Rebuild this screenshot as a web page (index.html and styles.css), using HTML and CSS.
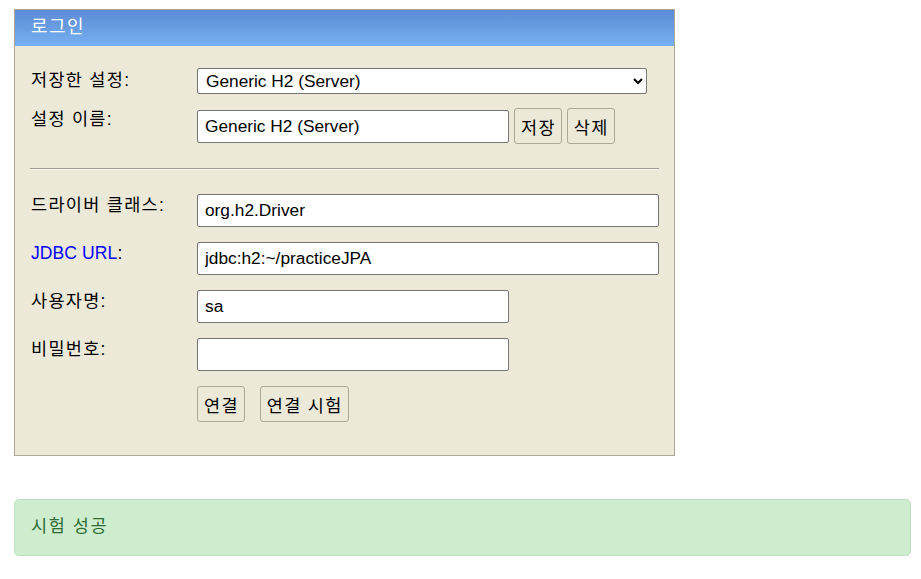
FILE: index.html
```html
<!DOCTYPE html>
<html lang="ko">
<head>
  <meta charset="UTF-8" />
  <meta name="viewport" content="width=device-width, initial-scale=1.0" />
  <title>H2 Console</title>
  <link rel="stylesheet" href="styles.css">
</head>
<body>
  <!-- Login panel -->
  <form class="login" name="login">
    <div class="login-title">로그인</div>
    <div class="login-body">
      <div class="field">
        <label class="field-label" for="setting">저장한 설정:</label>
        <select id="setting" class="setting-select">
          <option>Generic H2 (Server)</option>
          <option>Generic H2 (Embedded)</option>
        </select>
      </div>
      <div class="field">
        <label class="field-label" for="name">설정 이름:</label>
        <div class="field-control">
          <input type="text" id="name" class="input input-short" value="Generic H2 (Server)" />
          <button type="button" class="btn">저장</button>
          <button type="button" class="btn">삭제</button>
        </div>
      </div>

      <hr class="divider" />

      <div class="field">
        <label class="field-label" for="driver">드라이버 클래스:</label>
        <input type="text" id="driver" class="input input-long" value="org.h2.Driver" />
      </div>
      <div class="field">
        <label class="field-label label-latin" for="url"><a href="#" class="help-link">JDBC URL</a>:</label>
        <input type="text" id="url" class="input input-long" value="jdbc:h2:~/practiceJPA" />
      </div>
      <div class="field">
        <label class="field-label" for="user">사용자명:</label>
        <input type="text" id="user" class="input input-short" value="sa" />
      </div>
      <div class="field">
        <label class="field-label" for="password">비밀번호:</label>
        <input type="password" id="password" class="input input-short" value="" />
      </div>
      <div class="field">
        <span class="field-label"></span>
        <div class="field-control actions">
          <button type="button" class="btn">연결</button>
          <button type="button" class="btn">연결 시험</button>
        </div>
      </div>
    </div>
  </form>

  <!-- Test result -->
  <div class="alert">시험 성공</div>
</body>
</html>
```

FILE: styles.css
```css
body {
  margin: 0;
  padding: 9px 10px 20px 14px;
  font-family: "Liberation Sans", Arial, "Noto Sans CJK KR", sans-serif;
  font-size: 17.5px;
  color: #000;
  background: #fff;
}
.login {
  width: 661px;
  box-sizing: border-box;
  border: 1px solid #aaa799;
  background: #ece9d8;
}
.login-title {
  height: 36px;
  line-height: 34px;
  padding-left: 16px;
  color: #fff;
  font-size: 18px;
  letter-spacing: 1.5px;
  background: linear-gradient(to bottom, #5c8bd4, #76b0f1);
}
.login-body {
  padding: 23px 14px 33px 15px;
}
.field {
  display: flex;
  align-items: flex-start;
  margin-bottom: 15px;
}
.field:first-child {
  margin-bottom: 14px;
}
.field:last-child {
  margin-bottom: 0;
}
.field-label {
  flex: 0 0 167px;
  padding: 1px 0 0 1px;
  box-sizing: border-box;
  line-height: 21px;
  letter-spacing: 1.3px;
}
.label-latin {
  letter-spacing: 0.1px;
}
.field-control {
  display: flex;
  align-items: center;
  gap: 5px;
}
.field-control .input {
  margin-top: 1px;
}
.actions {
  gap: 15px;
}
.help-link {
  color: #0000ff;
  text-decoration: none;
}
.setting-select {
  width: 450px;
  height: 26px;
  margin-top: -1px;
  font-family: inherit;
  font-size: 17.3px;
  padding: 0 4px;
  border: 1px solid #767676;
  border-radius: 2px;
  background-color: #fff;
}
.input {
  height: 33px;
  box-sizing: border-box;
  padding: 0 7px;
  font-family: inherit;
  font-size: 17.3px;
  border: 1px solid #767676;
  border-radius: 2px;
  background: #fff;
}
.input-short {
  width: 312px;
}
.input-long {
  width: 462px;
}
.btn {
  height: 36px;
  padding: 0 5px 0 6px;
  font-family: inherit;
  font-size: 17.5px;
  letter-spacing: 1.3px;
  color: #000;
  background: #ece9d8;
  border: 1px solid #aba897;
  border-radius: 3px;
}
.divider {
  margin: 24px 0 24px 0;
  width: 629px;
  border: 0;
  border-top: 1px solid #a09d92;
  border-bottom: 1px solid #f7f5ee;
}
.alert {
  margin-top: 43px;
  height: 57px;
  box-sizing: border-box;
  padding: 0 16px;
  line-height: 53px;
  font-size: 17.5px;
  letter-spacing: 1.6px;
  color: #2f6b34;
  background: #ceedce;
  border: 1px solid #bcdfbd;
  border-radius: 5px;
}
```
